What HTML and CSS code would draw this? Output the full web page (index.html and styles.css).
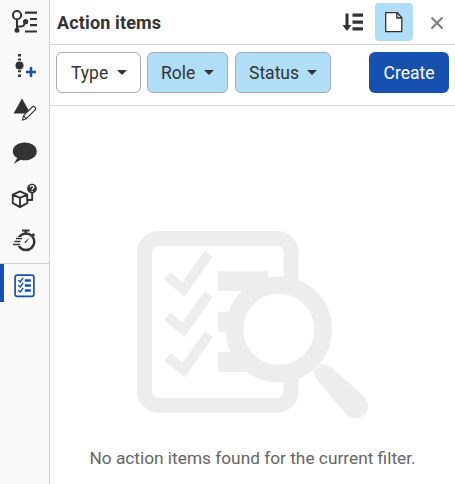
FILE: index.html
```html
<!DOCTYPE html>
<html lang="en">
<head>
<meta charset="utf-8">
<title>Action items</title>
<link rel="stylesheet" href="styles.css">
</head>
<body>
<div class="app">
  <nav class="rail">
    <button class="rail-item" aria-label="Versions"><svg width="49" height="44" viewBox="0 0 49 44"><g fill="none" stroke="#333" stroke-width="2"><circle cx="17" cy="15.2" r="4.1"/><path d="M17 19.5V30M17 26.5h4q3 0 4-4"/><path d="M25 12.7h12M30 19h7M30 25.2h7M25 31.5h12" stroke-width="2.2"/></g><circle cx="17" cy="30.2" r="2.5" fill="#333"/><circle cx="25.6" cy="21.7" r="2.6" fill="#333"/></svg></button>
    <button class="rail-item" aria-label="Add version"><svg width="49" height="44" viewBox="0 44 49 44"><path d="M18 54h3v2.500h-3zM18 58.500h3v2h-3zM18 70.300h3v2h-3zM18 74.500h3v2.500h-3z" fill="#333"/><circle cx="19.5" cy="65.5" r="4" fill="#333"/><path d="M26 72h10M31 67v10" stroke="#1651b0" stroke-width="2.5"/></svg></button>
    <button class="rail-item" aria-label="Edit part"><svg width="49" height="44" viewBox="0 88 49 44"><path d="M22 98.5l8.500 15h-17z" fill="#333"/><path d="M22.500 120l1-4.300 8.700-8.700q1.200-1.200 2.700.1t.2 2.700l-8.800 8.900zM23.500 115.700l2.800 3" fill="#fafafa" stroke="#333" stroke-width="1.100"/></svg></button>
    <button class="rail-item" aria-label="Comments"><svg width="49" height="44" viewBox="0 132 49 44"><path d="M24.800 142.600c6.800 0 12 3.800 12 8.800s-5.200 8.800-12 8.800q-2 0-4-.5l-7 4 3.500-5.700c-2.800-1.600-4.500-3.900-4.500-6.600 0-5 5.200-8.800 12-8.800z" fill="#333"/></svg></button>
    <button class="rail-item" aria-label="Part help"><svg width="49" height="44" viewBox="0 176 49 44"><g fill="none" stroke="#333" stroke-width="1.900" stroke-linejoin="round"><path d="M20 191.400l7.200 3.200v8.600l-7.200 4-7.200-4v-8.600zM12.800 194.600l7.200 3.300 7.200-3.300M20 198v9M27.500 200h4.700v-7"/></g><circle cx="32" cy="188.600" r="4.900" fill="#333"/><path d="M30.200 187.300q.1-1.700 1.900-1.700t1.800 1.500c0 1.200-1.800 1.200-1.800 2.700M32.100 190.800v1.200" fill="none" stroke="#fafafa" stroke-width="1.300"/></svg></button>
    <button class="rail-item last" aria-label="Performance"><svg width="49" height="43" viewBox="0 220 49 43"><circle cx="26" cy="241.800" r="8.300" fill="none" stroke="#333" stroke-width="2.500"/><path d="M13 237h8.500v9H13z" fill="#fafafa"/><path d="M22 229.500h7.500v2H27v3h-2.500v-3H22zM31.800 234.500l1.400-1.400 2 2-1.400 1.400z" fill="#333"/><path d="M16 238.500h6M14.500 241.500h6M13 244.500h7" stroke="#333" stroke-width="1.300"/><path d="M25 241.400l4.800-3.700-3.700 4.900q-1 .8-1.500.2t.4-1.400z" fill="#333"/></svg></button>
    <button class="rail-item active" aria-label="Action items"><svg width="45" height="38" viewBox="4 264 45 38"><rect x="15.100" y="275.100" width="18.800" height="21.300" rx="2.200" fill="none" stroke="#1651b0" stroke-width="1.700"/><g fill="none" stroke="#1651b0" stroke-width="1.400"><path d="M18.200 280.300l2 1.600 3-4M18.200 285.300l2 1.600 3-4M18.200 290.300l2 1.600 3-4"/><path d="M24.800 280.600h6M24.800 285.600h6M24.800 290.600h6" stroke-width="2.500"/></g></svg></button>
  </nav>
  <main class="panel">
    <header class="header">
      <h1>Action items</h1>
      <button class="tool" aria-label="Sort"><svg width="38" height="38" viewBox="334 3 38 38"><path d="M345.500 13.500h3V25h3L347 31l-4.500-6h3zM352.500 13.500H363v3.300h-10.500zM352.500 20.500H363v3.200h-10.500zM352.500 27.300H363v3.200h-10.500z" fill="#333"/></svg></button>
      <button class="tool selected" aria-label="Current document"><svg width="38" height="38" viewBox="375 3 38 38"><path d="M385.700 12.700h11.700l4.400 5v14h-16.100zM396.800 13v5h5" fill="#fff" stroke="#333" stroke-width="1.300"/></svg></button>
      <button class="close" aria-label="Close"><svg width="14" height="14" viewBox="0 0 14 14"><path d="M1.500 1.500l11 11M12.500 1.500l-11 11" stroke="#808080" stroke-width="2.200"/></svg></button>
    </header>
    <div class="filters">
      <button class="filter type">Type<i class="caret"></i></button>
      <button class="filter role on">Role<i class="caret"></i></button>
      <button class="filter status on">Status<i class="caret"></i></button>
      <button class="create">Create</button>
    </div>
    <section class="empty">
      <svg class="art" width="255" height="210" viewBox="0 0 765 630"><rect x="58.500" y="55.500" width="440" height="500" rx="42" fill="none" stroke="#ededed" stroke-width="45"/><path d="M127 168l49 40 75-107M127 289l49 40 75-107M127 410l49 40 75-107" fill="none" stroke="#ededed" stroke-width="30"/><path d="M279 154h150v59H279zM279 275h100v61H279zM279 396h120v60H279z" fill="#ededed"/><circle cx="461.500" cy="328" r="133" fill="#fff" stroke="#ededed" stroke-width="53"/><path d="M567 451L585 432Q601 431 624 447L713 525C744 552 726 595 693 595Q675 595 662 581L579 484Q565 467 567 451z" fill="#ededed"/></svg>
      <p>No action items found for the current filter.</p>
    </section>
  </main>
</div>
</body>
</html>
```
FILE: styles.css
```css
* { box-sizing: border-box; }
body { margin: 0; background: #fff; color: #333; font-family: Roboto, "Liberation Sans", sans-serif; }
button { margin: 0; padding: 0; border: 0; background: none; color: inherit; font: inherit; }
svg { display: block; flex: none; }
.app { display: flex; width: 455px; height: 484px; overflow: hidden; }
.rail { width: 50px; flex: none; background: #fafafa; border-right: 1px solid #d0d0d0; }
.rail-item { display: block; width: 49px; height: 44px; }
.rail-item.last { height: 44px; border-bottom: 1px solid #d0d0d0; }
.rail-item.active { height: 38px; border-left: 4px solid #1651b0; }
.panel { flex: 1; display: flex; flex-direction: column; min-width: 0; }
.header { display: flex; align-items: center; height: 45px; padding: 0 11px 1px 7px; border-bottom: 1px solid #d5d5d5; }
.header h1 { flex: 1; margin: 0; padding-top: 2px; font-size: 18px; line-height: 24px; font-weight: 700; letter-spacing: .15px; white-space: nowrap; }
.tool { width: 38px; height: 38px; margin-right: 3px; border-radius: 4px; }
.tool.selected { margin-right: 17px; background: #b1def7; }
.close { width: 14px; height: 14px; padding-top: 1px; }
.filters { display: flex; height: 61px; gap: 6px; padding: 7px 6px 0; border-bottom: 1px solid #d5d5d5; }
.filter { display: flex; align-items: center; justify-content: space-between; height: 41px; padding: 0 13px 0 14px; border: 1px solid #aaa; border-radius: 6px; font-size: 17.5px; background: #fff; }
.filter.on { background: #b1def7; }
.type { width: 85px; }
.role { width: 81px; padding-left: 13px; }
.status { width: 96px; padding-left: 13px; margin-left: 1px; }
.caret { border: 5px solid transparent; border-top-color: #333; border-bottom: 0; }
.create { width: 80px; height: 41px; margin-left: auto; border-radius: 6px; background: #1651b0; color: #fff; font-size: 17.5px; }
.empty { padding-top: 114px; color: #666; }
.art { margin-left: 75px; }
.empty p { margin: 17px 0 0; text-align: center; font-size: 17.3px; line-height: 22px; white-space: nowrap; }
```
